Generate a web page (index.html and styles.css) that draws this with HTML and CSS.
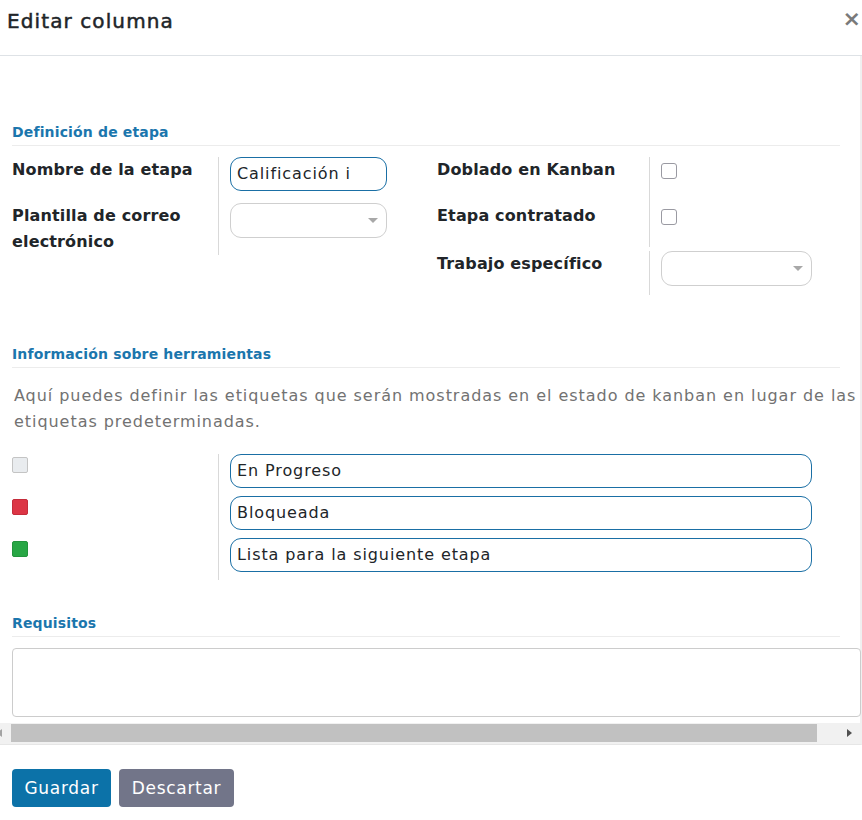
FILE: index.html
```html
<!DOCTYPE html>
<html lang="es">
<head>
<meta charset="utf-8">
<title>Editar columna</title>
<link rel="stylesheet" href="styles.css">
</head>
<body>
<div class="modal">
  <header class="modal-header">
    <h4 class="modal-title">Editar columna</h4>
    <span class="close">×</span>
  </header>
  <div class="modal-body">
    <div class="sheet">
      <div class="separator first">Definición de etapa</div>
      <div class="groups">
        <div class="group group-left">
          <div class="row row1">
            <div class="label">Nombre de la etapa</div>
            <div class="field"><div class="input w157">Calificación i</div></div>
          </div>
          <div class="row row2 last">
            <div class="label">Plantilla de correo electrónico</div>
            <div class="field"><div class="select w157"><span class="caret"></span></div></div>
          </div>
        </div>
        <div class="group group-right">
          <div class="subgroup">
            <div class="row rrow1">
              <div class="label">Doblado en Kanban</div>
              <div class="field"><span class="checkbox"></span></div>
            </div>
            <div class="row rrow2">
              <div class="label">Etapa contratado</div>
              <div class="field"><span class="checkbox"></span></div>
            </div>
          </div>
          <div class="subgroup sub2">
            <div class="row rrow3">
              <div class="label">Trabajo específico</div>
              <div class="field"><div class="select w151"><span class="caret"></span></div></div>
            </div>
          </div>
        </div>
      </div>

      <div class="separator second">Información sobre herramientas</div>
      <p class="help">Aquí puedes definir las etiquetas que serán mostradas en el estado de kanban en lugar de las etiquetas predeterminadas.</p>
      <div class="group legend">
        <div class="row lrow">
          <div class="label"><span class="swatch grey"></span></div>
          <div class="field"><div class="input w582">En Progreso</div></div>
        </div>
        <div class="row lrow">
          <div class="label"><span class="swatch red"></span></div>
          <div class="field"><div class="input w582">Bloqueada</div></div>
        </div>
        <div class="row lrow last">
          <div class="label"><span class="swatch green"></span></div>
          <div class="field"><div class="input w582">Lista para la siguiente etapa</div></div>
        </div>
      </div>

      <div class="separator third">Requisitos</div>
      <div class="textarea"></div>
    </div>
    <div class="hscroll">
      <span class="arrow left"></span>
      <div class="thumb"></div>
      <span class="arrow right"></span>
    </div>
  </div>
  <footer class="modal-footer">
    <button class="btn primary">Guardar</button>
    <button class="btn secondary">Descartar</button>
  </footer>
</div>
</body>
</html>
```

FILE: styles.css
```css
* { box-sizing: border-box; }
html, body { margin: 0; padding: 0; background: #fff; }
body {
  font-family: "DejaVu Sans", "Open Sans", sans-serif;
  color: #212529;
  width: 862px;
  height: 820px;
  overflow: hidden;
}
.modal { width: 862px; }

.modal-header {
  height: 56px;
  border-bottom: 1px solid #dee2e6;
  display: flex;
  justify-content: space-between;
  align-items: flex-start;
  padding: 7px 1px 0 7px;
}
.modal-title {
  margin: 0;
  font-size: 20px;
  font-weight: 400;
  line-height: 28px;
  color: #212529;
  -webkit-text-stroke: 0.5px #212529;
  letter-spacing: 1.1px;
}
.close {
  font-size: 22px;
  font-weight: 700;
  color: #7a7a7a;
  line-height: 24px;
}

.modal-body {
  border-right: 2px solid #f0f0f0;
  border-bottom: 1px solid #e6e6e6;
}
.sheet { padding: 66px 0 0 12px; }

.separator {
  color: #1b76ad;
  font-size: 14px;
  font-weight: 700;
  letter-spacing: 0.15px;
  line-height: 20px;
  padding-bottom: 3px;
  border-bottom: 1px solid #ececec;
  width: 828px;
}
.separator.first { margin-bottom: 11px; }
.separator.second { margin-top: 49px; }
.separator.third { margin-top: 33px; margin-bottom: 11px; }

.groups { display: flex; }
.group-left { width: 425px; }

.row { display: flex; }
.label {
  font-size: 16px;
  font-weight: 700;
  letter-spacing: 0.15px;
  line-height: 26px;
  color: #212529;
}
.group-left .label { width: 206px; }
.group-left .field { padding-bottom: 12px; }
.group-left .row.last .field { padding-bottom: 1px; }
.field {
  border-left: 1px solid #d9d9d9;
  padding-left: 11px;
}

.group-right .label { width: 212px; }
.rrow1 .field { height: 46px; padding-top: 6px; }
.rrow2 .field { height: 44px; padding-top: 6px; }
.sub2 { margin-top: 4px; }
.rrow3 .field { height: 44px; }

.input, .select {
  height: 34px;
  border-radius: 11px;
  font-size: 16px;
  letter-spacing: 0.9px;
  line-height: 32px;
  padding: 0 6px;
  white-space: nowrap;
  overflow: hidden;
}
.input { border: 1px solid #1a6fa5; color: #212529; }
.select {
  border: 1px solid #cfcfcf;
  height: 35px;
  position: relative;
}
.caret {
  position: absolute;
  right: 8px;
  top: 14px;
  width: 0; height: 0;
  border-left: 5px solid transparent;
  border-right: 5px solid transparent;
  border-top: 5px solid #a8a8a8;
}
.w157 { width: 157px; }
.w151 { width: 151px; }
.w582 { width: 582px; }

.checkbox {
  display: block;
  width: 16px;
  height: 16px;
  border: 1px solid #9a9aa2;
  border-radius: 3px;
}

.help {
  margin: 15px 0 19px 2px;
  font-size: 16px;
  letter-spacing: 0.95px;
  line-height: 26px;
  color: #727272;
  width: 848px;
}

.legend .label { width: 206px; }
.lrow .field { padding-bottom: 8px; }
.swatch {
  display: block;
  width: 16px;
  height: 16px;
  border-radius: 2px;
  margin-top: 3px;
}
.swatch.grey { background: #e9ecef; border: 1px solid #c4c4c4; }
.swatch.red { background: #dc3545; border: 1px solid #c42c3b; }
.swatch.green { background: #28a745; border: 1px solid #23943d; }

.textarea {
  width: 849px;
  height: 69px;
  border: 1px solid #cccccc;
  border-radius: 4px;
}

.hscroll {
  margin-top: 6px;
  height: 21px;
  background: #f1f1f1;
  position: relative;
}
.thumb {
  position: absolute;
  left: 11px;
  width: 806px;
  top: 1px;
  height: 18px;
  background: #c1c1c1;
}
.arrow {
  position: absolute;
  top: 6px;
  width: 0; height: 0;
  border-top: 4px solid transparent;
  border-bottom: 4px solid transparent;
}
.arrow.left { left: -3px; border-right: 5px solid #a3a3a3; }
.arrow.right { left: 847px; border-left: 5px solid #505050; }

.modal-footer {
  padding: 24px 12px;
  display: flex;
  gap: 8px;
}
.btn {
  font-family: inherit;
  font-size: 17px;
  font-weight: 400;
  letter-spacing: 0.7px;
  color: #fff;
  border: none;
  border-radius: 4px;
  height: 38px;
  padding: 0;
  cursor: pointer;
}
.btn.primary { background: #0c72a8; width: 99px; }
.btn.secondary { background: #727589; width: 115px; }
```
